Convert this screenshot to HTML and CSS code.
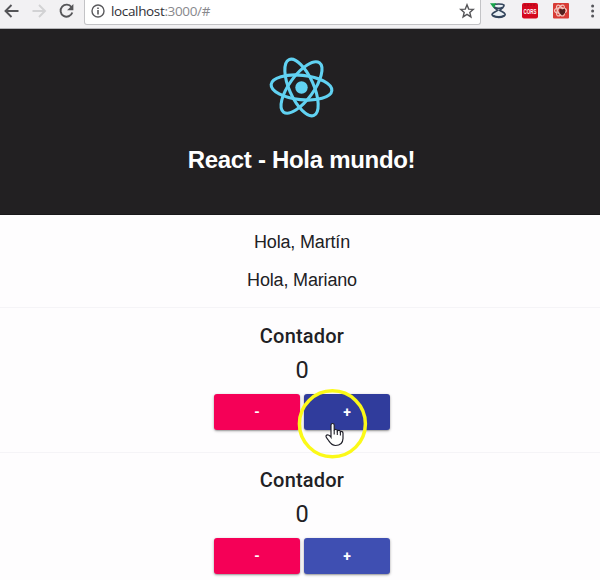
FILE: index.html
```html
<!DOCTYPE html>
<html lang="es">
<head>
<meta charset="utf-8">
<title>React - Hola mundo!</title>
<link rel="stylesheet" href="styles.css">
</head>
<body>
<div class="toolbar">
  <svg class="nav" width="84" height="28" viewBox="0 0 84 28" fill="none" stroke-width="1.9">
    <path d="M18.5 11H6M11.5 5L5.5 11L11.5 17" stroke="#555558"/>
    <path d="M32.5 11H45M39 5L45 11L39 17" stroke="#d2d2d4"/>
    <path d="M71.5 7.2A6 6 0 1 0 72.3 12.5" stroke="#555558"/>
    <path d="M73.4 4V10.3H67.1Z" fill="#555558"/>
  </svg>
  <div class="address">
    <svg class="info" width="14" height="14" viewBox="0 0 14 14"><circle cx="7" cy="7" r="6" fill="none" stroke="#5a5a5d" stroke-width="1.4"/><path d="M7 6V10.4M7 3.4V5" stroke="#5a5a5d" stroke-width="1.6"/></svg>
    <span class="url">localhost<span class="port">:3000/#</span></span>
    <svg class="star" width="16" height="16" viewBox="0 0 16 16"><path d="M8 1.8L9.7 6.1L14.3 6.4L10.8 9.4L11.9 13.9L8 11.4L4.1 13.9L5.2 9.4L1.7 6.4L6.3 6.1Z" fill="none" stroke="#555558" stroke-width="1.4"/></svg>
  </div>
  <svg class="extensions" width="119" height="28" viewBox="481 0 119 28">
    <path d="M493.5 5C495 3.6 502.5 3.6 504 5C504.5 7.5 500.8 9 499.6 10.4C501.5 11.6 505.2 12.6 505.2 14.8C504 18.2 493.3 18.2 492 14.8C492 12.6 496 11.6 497.6 10.4C496.4 9 493 7.5 493.5 5Z" fill="#e9eff4" stroke="#34455c" stroke-width="1.6"/>
    <path d="M494.5 7.4Q498.8 9.5 503 7.4M493 15.7Q498.7 18.4 504.3 15.7" fill="none" stroke="#34455c" stroke-width="2"/>
    <path d="M490 3.2L496.3 3.2L493.7 8.3Z" fill="#16a34a"/>
    <rect x="522" y="3" width="16" height="15.5" rx="2" fill="#d5091f"/>
    <path d="M524 5H536" stroke="#9d0b1b" stroke-width="1" stroke-dasharray="2 1"/>
    <text class="cors" x="530" y="13.6" text-anchor="middle" textLength="13" lengthAdjust="spacingAndGlyphs">CORS</text>
    <rect x="553" y="3" width="16" height="15.5" rx="1" fill="#d83b35"/>
    <g fill="none" stroke="#f3c5bd" stroke-width="1.2"><ellipse cx="560.5" cy="10.5" rx="6" ry="2.7"/><ellipse cx="560.5" cy="10.5" rx="6" ry="2.7" transform="rotate(60 560.5 10.5)"/><ellipse cx="560.5" cy="10.5" rx="6" ry="2.7" transform="rotate(120 560.5 10.5)"/></g>
    <path d="M559.5 8.5L562 9.5L565 8.5V13L562 15.5L559.5 13Z" fill="#50201e"/>
    <g fill="#55555a"><circle cx="592.6" cy="6" r="1.5"/><circle cx="592.6" cy="11" r="1.5"/><circle cx="592.6" cy="16" r="1.5"/></g>
  </svg>
</div>
<header class="app-header">
  <svg class="logo" width="76" height="72" viewBox="-37.5 -35.5 76 72" fill="none" stroke="#61d2f2" stroke-width="3.1">
    <ellipse rx="30.5" ry="12.2" transform="rotate(6)"/>
    <ellipse rx="30.5" ry="12.2" transform="rotate(66)"/>
    <ellipse rx="30.5" ry="12.2" transform="rotate(126)"/>
    <circle r="6.2" fill="#61d2f2" stroke="none"/>
  </svg>
  <h1>React - Hola mundo!</h1>
</header>
<main>
  <section class="greetings">
    <p>Hola, Martín</p>
    <p>Hola, Mariano</p>
  </section>
  <section class="counter">
    <h2>Contador</h2>
    <div class="value">0</div>
    <div class="actions"><button class="minus">-</button><button class="plus hovered">+</button></div>
  </section>
  <section class="counter">
    <h2>Contador</h2>
    <div class="value">0</div>
    <div class="actions"><button class="minus">-</button><button class="plus">+</button></div>
  </section>
</main>
<svg class="pointer" width="72" height="72" viewBox="296 387 72 72">
  <circle cx="332.4" cy="423.8" r="33" fill="none" stroke="#fbf918" stroke-width="3.5"/>
  <path d="M331 425.2C331 422.9 334.2 422.9 334.2 425.2V430.5C334.5 429 337.3 429.1 337.4 431C338.2 429.7 340.4 430.3 340.4 431.8C341.5 431 343 431.7 343 433.2V438.5C342.8 443 340.5 445.5 335.5 445.5C331.5 445.5 330.1 442.7 328.2 440C326.8 438 325.5 437 326 435.8C327 434.3 329.5 434.8 331 437.2Z" fill="#fff" stroke="#20202a" stroke-width="1.2"/>
  <path d="M334.2 430V434.5M337.3 431V435M340.4 432V435.5" stroke="#20202a" stroke-width="1.1"/>
</svg>
</body>
</html>
```
FILE: styles.css
```css
* { box-sizing: border-box; }
body {
  margin: 0;
  width: 600px;
  height: 580px;
  overflow: hidden;
  position: relative;
  background: #fefdfe;
  font-family: "Liberation Sans", Arial, sans-serif;
  color: #212124;
}
.toolbar {
  height: 29px;
  display: flex;
  background: #f2f1f3;
  border-bottom: 1px solid #b5b5b8;
}
.nav, .extensions { flex: none; display: block; }
.address {
  width: 397px;
  height: 25px;
  padding: 0 5px 3px 6px;
  display: flex;
  align-items: center;
  background: #fff;
  border: 1px solid #c3c3c6;
  border-top: 0;
  border-radius: 0 0 3px 3px;
}
.url {
  flex: 1;
  margin-left: 6px;
  font: 13.5px/20px "Open Sans", sans-serif;
  letter-spacing: -.35px;
  color: #303035;
}
.port { color: #88888c; }
.cors { font: bold 7.5px "Liberation Sans", sans-serif; fill: #fff; }
.app-header {
  height: 186px;
  padding: 23px 0 0 3px;
  background: #222022;
  border-bottom: 1px solid #19181a;
  text-align: center;
}
.logo { display: block; margin: 0 auto; }
h1 {
  margin: 22px 0 0;
  font-size: 24px;
  line-height: 28px;
  letter-spacing: -.3px;
  color: #fff;
}
main { padding-left: 4px; text-align: center; }
.greetings { height: 92px; padding-top: 17px; font-size: 18px; line-height: 20px; letter-spacing: -.17px; }
.greetings p { margin: 0 0 18px; }
.counter {
  height: 145px;
  margin-left: -4px;
  padding: 16px 0 0 4px;
  border-top: 1px solid #f5f4f7;
  font-family: Roboto, sans-serif;
}
.counter + .counter { height: 128px; padding-top: 15px; }
h2 { margin: 0; font-size: 20px; font-weight: 500; line-height: 24px; letter-spacing: .2px; }
.value { margin-top: 6px; font-size: 23.5px; line-height: 32px; }
.actions { display: flex; justify-content: center; gap: 4px; margin-top: 8px; }
button {
  width: 86px;
  height: 36px;
  padding: 0;
  border: 0;
  border-radius: 3px;
  color: #fff;
  font: 700 14px/36px Roboto, sans-serif;
  box-shadow: 0 1px 3px #0005, 0 1px 1px #0002;
}
.minus { background: #f50057; }
.plus { background: #3f4fb2; }
.plus.hovered { background: #303c9c; }
.pointer { position: absolute; left: 296px; top: 387px; }
```
